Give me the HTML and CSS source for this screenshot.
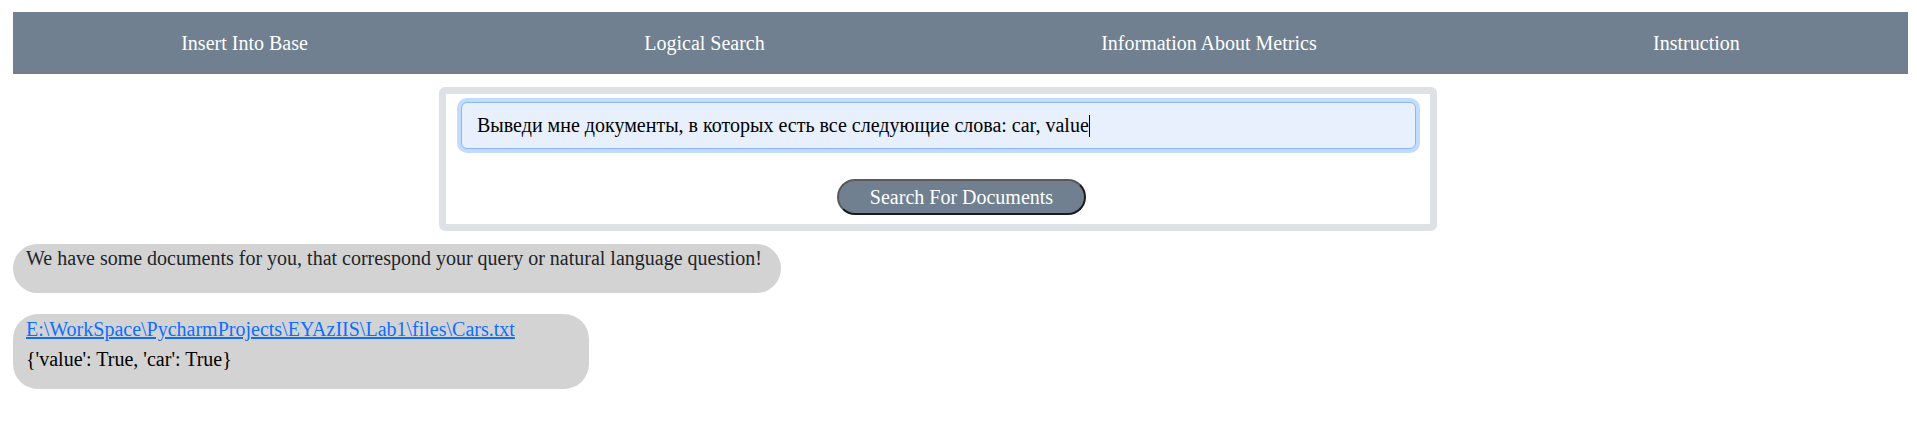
FILE: index.html
```html
<!DOCTYPE html>
<html lang="en">
<head>
<meta charset="utf-8">
<title>Logical Search</title>
<link rel="stylesheet" href="styles.css">
</head>
<body>
<div class="page">
  <nav class="nav">
    <a class="nav-item">Insert Into Base</a>
    <a class="nav-item">Logical Search</a>
    <a class="nav-item">Information About Metrics</a>
    <a class="nav-item">Instruction</a>
  </nav>
  <form class="search-box">
    <div class="query">Выведи мне документы, в которых есть все следующие слова: car, value<span class="caret"></span></div>
    <button type="button" class="search-btn">Search For Documents</button>
  </form>
  <div class="bubble bubble-intro">We have some documents for you, that correspond your query or natural language question!</div>
  <div class="bubble bubble-result">
    <a class="doc-link" href="#">E:\WorkSpace\PycharmProjects\EYAzIIS\Lab1\files\Cars.txt</a>
    <div class="doc-terms">{'value': True, 'car': True}</div>
  </div>
</div>
</body>
</html>
```
FILE: styles.css
```css
* { box-sizing: border-box; }
html, body { margin: 0; padding: 0; background: #fff; }
body {
  font-family: "Liberation Serif", "Times New Roman", serif;
  font-size: 20px;
  color: #212529;
}
.page { padding: 12px 9px 0 13px; }
.nav {
  height: 62px;
  background: #708090;
  display: flex;
  justify-content: space-around;
  align-items: center;
}
.nav-item { color: #fff; text-decoration: none; }
.search-box {
  margin: 13px 0 0 426px;
  width: 998px;
  border: 7px solid #dee2e6;
  border-radius: 6px;
  background: #fff;
  padding: 8px 14px 9px 15px;
  display: flex;
  flex-direction: column;
  align-items: flex-start;
}
.query {
  width: 955px;
  height: 47px;
  border: 1px solid #86b7fe;
  border-radius: 6px;
  background: #e8f0fe;
  box-shadow: 0 0 0 4px rgba(13, 110, 253, 0.25);
  padding: 0 15px;
  display: flex;
  align-items: center;
  color: #000;
  white-space: nowrap;
}
.caret {
  display: inline-block;
  width: 1px;
  height: 22px;
  background: #000;
}
.search-btn {
  margin: 30px 0 0 376px;
  width: 249px;
  height: 36px;
  border: 2px solid;
  border-color: #5a5a5a #1a1a1a #1a1a1a #5a5a5a;
  border-radius: 18px;
  background: #708090;
  color: #fff;
  font-family: inherit;
  font-size: 20px;
  padding: 0;
}
.bubble {
  background: #d3d3d3;
  border-radius: 25px;
  padding-left: 13px;
}
.bubble-intro {
  margin-top: 13px;
  width: 768px;
  height: 49px;
  padding-top: 3px;
}
.bubble-result {
  margin-top: 21px;
  width: 576px;
  height: 75px;
  padding-top: 4px;
}
.doc-link { color: #0d6efd; display: block; }
.doc-terms { margin-top: 7px; color: #000; }
```
